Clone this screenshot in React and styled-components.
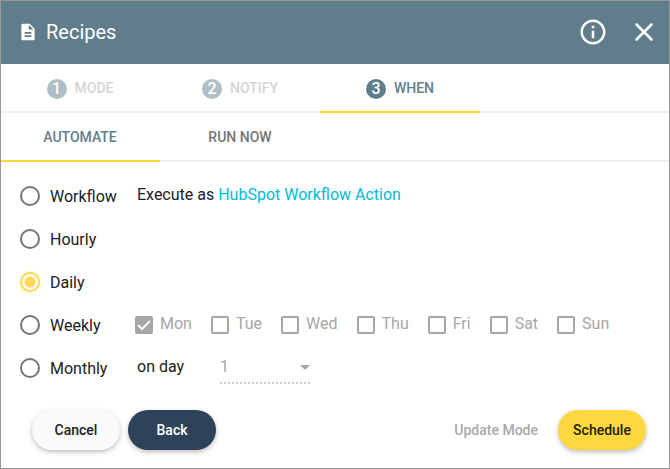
import React, { useState } from 'react';
import styled, { createGlobalStyle, css } from 'styled-components';

const GlobalStyle = createGlobalStyle`
  * {
    box-sizing: border-box;
  }

  body {
    margin: 0;
    background: #fff;
    color: #212121;
    font-family: Roboto, 'Liberation Sans', sans-serif;
    font-size: 16px;
    line-height: 24px;
  }

  button,
  select,
  input {
    font-family: inherit;
  }
`;

const Dialog = styled.main`
  display: flex;
  flex-direction: column;
  min-height: 100vh;
  background: #fff;
  outline: 1px solid #999;
  outline-offset: -1px;
`;

const Header = styled.header`
  display: flex;
  align-items: center;
  height: 64px;
  padding: 0 10px 0 18px;
  background: #607d8b;
  color: #fff;

  h1 {
    flex: 1;
    margin: 0 0 0 8px;
    font-size: 20px;
    font-weight: 400;
  }
`;

const IconButton = styled.button`
  display: flex;
  margin-left: 20px;
  padding: 0;
  border: 0;
  background: none;
  color: inherit;
  cursor: pointer;
`;

const TabBar = styled.nav`
  display: flex;
  height: 49px;
  border-bottom: 2px solid #eee;
`;

const Tab = styled.button`
  display: flex;
  align-items: center;
  justify-content: center;
  gap: 8px;
  flex: 0 1 160px;
  margin-bottom: -2px;
  padding: 0;
  border: 0;
  border-bottom: 2px solid transparent;
  background: none;
  color: #757575;
  font-size: 14px;
  font-weight: 500;
  cursor: pointer;

  &:disabled {
    color: #d5d5d5;
    cursor: default;
  }

  ${({ $active }) =>
    $active &&
    css`
      border-bottom-color: #fdd835;
      color: #607d8b;
    `}
`;

const StepNumber = styled.span`
  width: 20px;
  height: 20px;
  margin-top: 2px;
  border-radius: 50%;
  background: ${({ $active }) => ($active ? '#607d8b' : '#b0bec5')};
  color: #fff;
  font-size: 16px;
  line-height: 20px;
  text-align: center;
`;

const Options = styled.section`
  flex: 1;
  padding: 12px 20px 0;
`;

const OptionRow = styled.div`
  display: flex;
  align-items: center;
  height: 43px;
`;

const RadioLabel = styled.label`
  display: flex;
  align-items: center;
  gap: 10px;
  flex: 0 0 115px;
  padding-top: 2px;
  cursor: pointer;
`;

const Radio = styled.input`
  appearance: none;
  flex: none;
  width: 20px;
  height: 20px;
  margin: 0 0 2px;
  border: 2px solid #757575;
  border-radius: 50%;

  &:checked {
    border-color: #ffd954;
    background: radial-gradient(circle, #ffd954 5px, #fff 6px);
    box-shadow: 0 0 0 2px #fff9e1;
  }
`;

const Detail = styled.div`
  display: flex;
  align-items: center;
  padding: 0 0 2px 2px;

  a {
    margin-left: 4px;
    color: #00bcd4;
    text-decoration: none;
  }
`;

const Days = styled.div`
  display: flex;
  gap: 19px;
  padding-bottom: 2px;
`;

const DayLabel = styled.label`
  display: flex;
  align-items: center;
  gap: 7px;
  color: #a6a6a6;
`;

const Checkbox = styled.input`
  appearance: none;
  flex: none;
  width: 18px;
  height: 18px;
  margin: 2px 0 0;
  border: 2px solid #a6a6a6;
  border-radius: 2px;

  &:checked {
    background: #a6a6a6
      url("data:image/svg+xml,%3Csvg xmlns='http://www.w3.org/2000/svg' viewBox='0 0 14 14'%3E%3Cpath d='M1 7l4 4 8-8' fill='none' stroke='%23fff' stroke-width='2'/%3E%3C/svg%3E");
  }
`;

const SelectBox = styled.div`
  display: grid;
  align-items: center;
  width: 90px;
  margin-left: 36px;
  padding-top: 2px;
  color: #a6a6a6;

  select,
  svg {
    grid-area: 1 / 1;
  }

  svg {
    justify-self: end;
    pointer-events: none;
  }
`;

const DaySelect = styled.select`
  appearance: none;
  width: 100%;
  height: 32px;
  padding: 0;
  border: 0;
  border-bottom: 2px dotted #ccc;
  border-radius: 0;
  background: none;
  color: inherit;
  font-size: 16px;
  opacity: 1;
`;

const Footer = styled.footer`
  display: flex;
  gap: 8px;
  padding: 0 24px 19px 32px;
`;

const variants = {
  light: css`
    background: #fafafa;
    color: #212121;
  `,
  dark: css`
    background: #2e4359;
    color: #fff;
  `,
  primary: css`
    background: #ffd740;
    color: #212100;
  `,
};

const Button = styled.button`
  min-width: 88px;
  height: 40px;
  padding: 0 12px;
  border: 0;
  border-radius: 20px;
  font-size: 14px;
  font-weight: 500;
  box-shadow: 0 2px 5px rgba(0, 0, 0, 0.26);
  cursor: pointer;
  ${({ $variant }) => variants[$variant]}
`;

const FlatButton = styled(Button)`
  margin-left: auto;
  background: none;
  box-shadow: none;

  &:disabled {
    color: #a8a8a8;
    cursor: default;
  }
`;

const steps = ['MODE', 'NOTIFY', 'WHEN'];
const days = ['Mon', 'Tue', 'Wed', 'Thu', 'Fri', 'Sat', 'Sun'];
const schedules = ['Workflow', 'Hourly', 'Daily', 'Weekly', 'Monthly'];

const FileIcon = () => (
  <svg width="20" height="20" viewBox="0 0 24 24" fill="currentColor" aria-hidden="true">
    <path d="M14 2H6c-1.1 0-2 .9-2 2v16c0 1.1.9 2 2 2h12c1.1 0 2-.9 2-2V8l-6-6zm2 16H8v-2h8v2zm0-4H8v-2h8v2zm-3-5V3.500L18.500 9H13z" />
  </svg>
);

const InfoIcon = () => (
  <svg width="30" height="30" viewBox="0 0 24 24" fill="currentColor" aria-hidden="true">
    <path d="M11 17h2v-6h-2v6zm1-15C6.480 2 2 6.480 2 12s4.480 10 10 10 10-4.480 10-10S17.520 2 12 2zm0 18c-4.410 0-8-3.590-8-8s3.590-8 8-8 8 3.590 8 8-3.590 8-8 8zM11 9h2V7h-2v2z" />
  </svg>
);

const CloseIcon = () => (
  <svg width="32" height="32" viewBox="0 0 32 32" aria-hidden="true">
    <path d="M8.500 8.500l15 15M23.500 8.500l-15 15" stroke="currentColor" strokeWidth="2.500" strokeLinecap="round" />
  </svg>
);

const WeekDays = () => {
  const [checked, setChecked] = useState(['Mon']);

  const toggle = day =>
    setChecked(checked.includes(day) ? checked.filter(d => d !== day) : [...checked, day]);

  return (
    <Days>
      {days.map(day => (
        <DayLabel key={day}>
          <Checkbox
            type="checkbox"
            checked={checked.includes(day)}
            onChange={() => toggle(day)}
            disabled
          />
          {day}
        </DayLabel>
      ))}
    </Days>
  );
};

const MonthDay = () => (
  <Detail>
    <label htmlFor="month-day">on day</label>
    <SelectBox>
      <DaySelect id="month-day" defaultValue="1" disabled>
        {Array.from({ length: 31 }, (_, i) => (
          <option key={i}>{i + 1}</option>
        ))}
      </DaySelect>
      <svg width="10" height="5" viewBox="0 0 10 5" fill="currentColor" aria-hidden="true">
        <path d="M0 0h10L5 5z" />
      </svg>
    </SelectBox>
  </Detail>
);

const App = () => {
  const [schedule, setSchedule] = useState('Daily');
  const [tab, setTab] = useState('AUTOMATE');

  return (
    <>
      <GlobalStyle />
      <Dialog>
        <Header>
          <FileIcon />
          <h1>Recipes</h1>
          <IconButton type="button" aria-label="Info">
            <InfoIcon />
          </IconButton>
          <IconButton type="button" aria-label="Close">
            <CloseIcon />
          </IconButton>
        </Header>

        <TabBar aria-label="Steps">
          {steps.map((step, i) => (
            <Tab key={step} type="button" $active={i === 2} disabled={i !== 2}>
              <StepNumber $active={i === 2}>{i + 1}</StepNumber>
              {step}
            </Tab>
          ))}
        </TabBar>

        <TabBar aria-label="Run type">
          {['AUTOMATE', 'RUN NOW'].map(name => (
            <Tab key={name} type="button" $active={tab === name} onClick={() => setTab(name)}>
              {name}
            </Tab>
          ))}
        </TabBar>

        <Options>
          {schedules.map(name => (
            <OptionRow key={name}>
              <RadioLabel>
                <Radio
                  type="radio"
                  name="schedule"
                  checked={schedule === name}
                  onChange={() => setSchedule(name)}
                />
                {name}
              </RadioLabel>
              {name === 'Workflow' && (
                <Detail>
                  Execute as <a href="#workflow">HubSpot Workflow Action</a>
                </Detail>
              )}
              {name === 'Weekly' && <WeekDays />}
              {name === 'Monthly' && <MonthDay />}
            </OptionRow>
          ))}
        </Options>

        <Footer>
          <Button type="button" $variant="light">
            Cancel
          </Button>
          <Button type="button" $variant="dark">
            Back
          </Button>
          <FlatButton type="button" disabled>
            Update Mode
          </FlatButton>
          <Button type="button" $variant="primary">
            Schedule
          </Button>
        </Footer>
      </Dialog>
    </>
  );
};

export default App;
